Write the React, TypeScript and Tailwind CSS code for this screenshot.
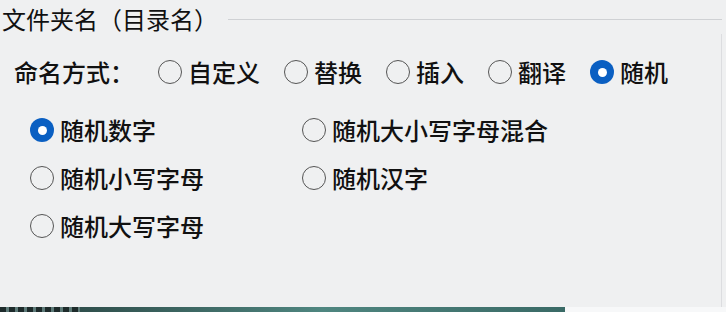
import { FC } from "react";

type RadioProps = { label: string; checked?: boolean };

const Radio: FC<RadioProps> = ({ label, checked }) => (
    <label className="flex items-center gap-[6px] h-[30px]">
        {checked ? (
            <span className="w-[24px] h-[24px] rounded-full bg-[#0a5fc2] flex items-center justify-center">
                <span className="w-[9px] h-[9px] rounded-full bg-white" />
            </span>
        ) : (
            <span className="w-[24px] h-[24px] rounded-full border-[1.5px] border-[#555]" />
        )}
        <span>{label}</span>
    </label>
);

const App: FC = () => {
    return (
        <div
            className="w-[726px] h-[312px] bg-[#eff0f1] flex flex-col overflow-hidden text-[24px] leading-[30px] font-medium text-[#111]"
            style={{ fontFamily: '"Noto Sans CJK SC", "Noto Sans", sans-serif' }}
        >
            <div className="flex items-center pt-[4px] pl-[2px] h-[34px]">
                <span className="shrink-0 font-normal">文件夹名（目录名）</span>
                <div className="flex-1 ml-[10px] mr-[4px] h-px bg-[#cfd1d4]" />
            </div>
            <div className="flex-1 flex flex-col mr-[4px] border-r border-[#dcdde0]">
                <div className="flex items-center pl-[14px] mt-[23px] gap-[24px]">
                    <span>命名方式：</span>
                    <Radio label="自定义" />
                    <Radio label="替换" />
                    <Radio label="插入" />
                    <Radio label="翻译" />
                    <Radio label="随机" checked />
                </div>
                <div className="grid grid-cols-[272px_1fr] pl-[30px] mt-[28px] gap-y-[18px]">
                    <Radio label="随机数字" checked />
                    <Radio label="随机大小写字母混合" />
                    <Radio label="随机小写字母" />
                    <Radio label="随机汉字" />
                    <Radio label="随机大写字母" />
                </div>
            </div>
            <div className="h-[5px] flex">
                <div className="w-[80px] bg-[repeating-linear-gradient(90deg,#1d2b2b_0px,#1d2b2b_6px,#5d7a78_6px,#5d7a78_9px)]" />
                <div className="w-[485px] bg-gradient-to-r from-[#2f4f4c] via-[#4f8680] to-[#3a6a66]" />
                <div className="flex-1 bg-[#f7f8f9]" />
            </div>
        </div>
    );
};

export default App;
